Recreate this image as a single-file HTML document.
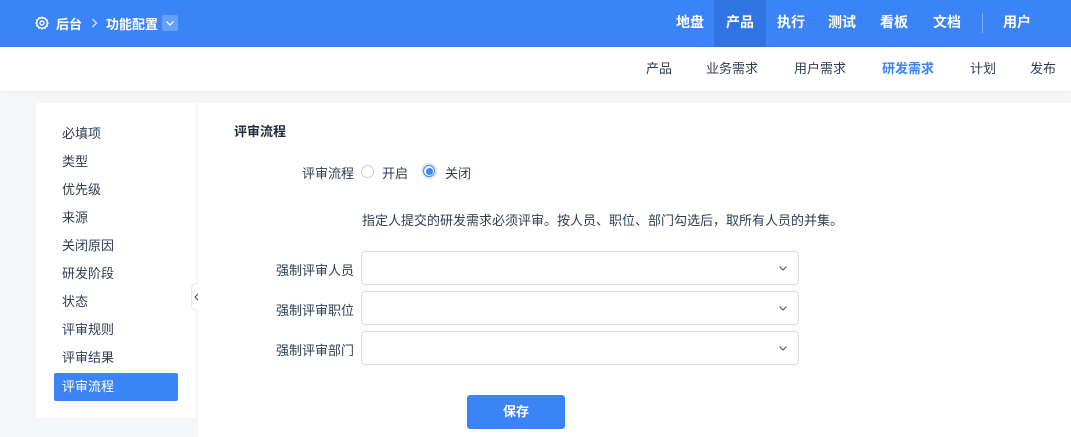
<!DOCTYPE html>
<html><head><meta charset="utf-8"><style>
*{margin:0;padding:0;box-sizing:border-box}
body{width:1071px;height:437px;overflow:hidden;background:#f5f6f8;font-family:"Liberation Sans","Noto Sans CJK SC",sans-serif;font-size:13px;color:#313c52;position:relative}
.top{position:absolute;left:0;top:0;width:1071px;height:47px;background:#3a84f7;color:#fff}
.abs{position:absolute;white-space:nowrap}
.nav{position:absolute;top:0;height:47px;line-height:45px;font-size:14px;font-weight:bold;color:#fff;text-align:center}
.sub{position:absolute;left:0;top:47px;width:1071px;height:44px;background:#fff;box-shadow:0 1px 3px rgba(0,0,0,.05)}
.sub span{position:absolute;top:0;line-height:44px;font-size:13px;color:#313c52}
.side{position:absolute;left:36px;top:103px;width:160px;height:315px;background:#fff}
.side div{position:absolute;left:18px;width:124px;height:28px;line-height:28px;padding-left:8px;font-size:13px;color:#313c52}
.main{position:absolute;left:198px;top:103px;width:873px;height:334px;background:#fff}
.lbl{position:absolute;text-align:right;width:120px;font-size:13px;color:#313c52}
.sel{position:absolute;left:361px;width:438px;height:34px;border:1px solid #d8dbe2;border-radius:3px;background:#fff}
.sel svg{position:absolute;right:10px;top:13px}
</style></head><body>
<div class="top">
  <svg class="abs" style="left:35px;top:16px" width="14" height="14" viewBox="0 0 14 14" fill="none" stroke="#fff" stroke-width="1.4"><circle cx="7" cy="7" r="2"/><path d="M7 1.2l1.3 1.2 1.7-.5.6 1.7 1.7.6-.5 1.7L13 7l-1.2 1.3.5 1.7-1.7.6-.6 1.7-1.7-.5L7 12.8l-1.3-1.2-1.7.5-.6-1.7-1.7-.6.5-1.7L1 7l1.2-1.3-.5-1.7 1.7-.6.6-1.7 1.7.5z"/></svg>
  <span class="abs" style="left:56px;top:14px;font-size:13px;font-weight:bold">后台</span>
  <svg class="abs" style="left:91px;top:18px" width="7" height="10" viewBox="0 0 7 10" fill="none" stroke="rgba(255,255,255,.75)" stroke-width="1.4"><path d="M1.5 1l4 4-4 4"/></svg>
  <span class="abs" style="left:106px;top:14px;font-size:13px;font-weight:bold">功能配置</span>
  <div class="abs" style="left:162px;top:15px;width:16px;height:16px;background:rgba(255,255,255,.22);border-radius:2px"></div>
  <svg class="abs" style="left:165px;top:20px" width="10" height="7" viewBox="0 0 10 7" fill="none" stroke="#fff" stroke-width="1.2"><path d="M1.5 1.5L5 5l3.5-3.5"/></svg>
  <div class="nav" style="left:666px;width:48px">地盘</div>
  <div class="nav" style="left:714px;width:52px;background:#2f74e0">产品</div>
  <div class="nav" style="left:766px;width:50px">执行</div>
  <div class="nav" style="left:816px;width:52px">测试</div>
  <div class="nav" style="left:868px;width:52px">看板</div>
  <div class="nav" style="left:920px;width:54px">文档</div>
  <div class="abs" style="left:982px;top:13px;width:1px;height:20px;background:rgba(255,255,255,.35)"></div>
  <div class="nav" style="left:992px;width:50px">用户</div>
</div>
<div class="sub">
  <span style="left:646px">产品</span>
  <span style="left:706px">业务需求</span>
  <span style="left:794px">用户需求</span>
  <span style="left:882px;color:#3a84f7;font-weight:bold">研发需求</span>
  <span style="left:970px">计划</span>
  <span style="left:1030px">发布</span>
</div>
<div class="side">
  <div style="top:17px">必填项</div>
  <div style="top:45px">类型</div>
  <div style="top:73px">优先级</div>
  <div style="top:101px">来源</div>
  <div style="top:129px">关闭原因</div>
  <div style="top:157px">研发阶段</div>
  <div style="top:185px">状态</div>
  <div style="top:213px">评审规则</div>
  <div style="top:241px">评审结果</div>
  <div style="top:270px;background:#3a84f7;color:#fff;border-radius:2px">评审流程</div>
</div>
<div class="abs" style="left:191px;top:283px;width:12px;height:28px;background:#fff;border:1px solid #e6e8ee;border-radius:6px"></div>
<svg class="abs" style="left:194px;top:292px" width="6" height="10" viewBox="0 0 6 10" fill="none" stroke="#555" stroke-width="1.1"><path d="M5 1L1 5l4 4"/></svg>
<div class="main"></div>
<span class="abs" style="left:234px;top:121px;font-weight:bold;font-size:13px;color:#1f2a3c">评审流程</span>
<div class="lbl" style="left:234px;top:163px">评审流程</div>
<div class="abs" style="left:361px;top:165px;width:13px;height:13px;border:1px solid #c8ccd5;border-radius:50%"></div>
<span class="abs" style="left:382px;top:163px">开启</span>
<div class="abs" style="left:421px;top:163px;width:16px;height:16px;border-radius:50%;background:#dbe8fd"></div>
<div class="abs" style="left:423px;top:165px;width:12px;height:12px;border-radius:50%;border:1px solid #3a84f7;background:#fff"></div>
<div class="abs" style="left:425.5px;top:167.5px;width:7px;height:7px;border-radius:50%;background:#3a84f7"></div>
<span class="abs" style="left:445px;top:163px">关闭</span>
<span class="abs" style="left:362px;top:210px">指定人提交的研发需求必须评审。按人员、职位、部门勾选后，取所有人员的并集。</span>
<div class="lbl" style="left:234px;top:260px">强制评审人员</div>
<div class="lbl" style="left:234px;top:300px">强制评审职位</div>
<div class="lbl" style="left:234px;top:340px">强制评审部门</div>
<div class="sel" style="top:251px"><svg width="10" height="7" viewBox="0 0 10 7" fill="none" stroke="#555" stroke-width="1.1"><path d="M1.5 1.5L5 5l3.5-3.5"/></svg></div>
<div class="sel" style="top:291px"><svg width="10" height="7" viewBox="0 0 10 7" fill="none" stroke="#555" stroke-width="1.1"><path d="M1.5 1.5L5 5l3.5-3.5"/></svg></div>
<div class="sel" style="top:331px"><svg width="10" height="7" viewBox="0 0 10 7" fill="none" stroke="#555" stroke-width="1.1"><path d="M1.5 1.5L5 5l3.5-3.5"/></svg></div>
<div class="abs" style="left:467px;top:395px;width:98px;height:34px;background:#3a84f7;border-radius:3px;color:#fff;text-align:center;line-height:34px;font-weight:bold;font-size:13px">保存</div>
</body></html>
